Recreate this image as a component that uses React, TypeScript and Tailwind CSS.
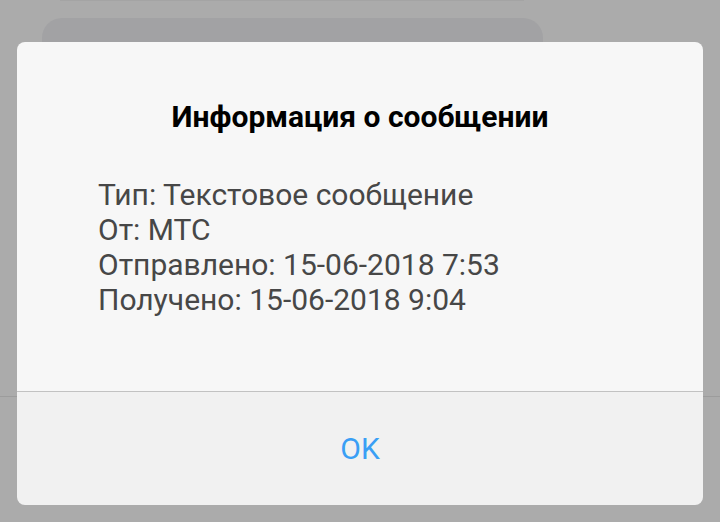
export default function App() {
  return (
    <div className="relative w-[720px] h-[522px] overflow-hidden bg-[#ababab] font-['Roboto',sans-serif]">
      <div className="ml-[60px] w-[464px] h-[1px] bg-[#a4a4a4]" />
      <div className="ml-[42px] mt-[17px] w-[501px] h-[60px] rounded-t-[20px] bg-[#a2a2a4]" />
      <div className="mt-[318px] h-[1px] bg-[#9c9c9c]" />

      <div className="absolute left-[17px] top-[42px] w-[686px] h-[463px] rounded-[8px] overflow-hidden flex flex-col">
        <div className="h-[349px] bg-[#f7f7f7]">
          <h1 className="mt-[58px] text-center text-[30px] leading-[34px] font-bold text-black">
            Информация о сообщении
          </h1>
          <div className="mt-[43px] pl-[81px] text-[30px] leading-[35px] text-[#474747]">
            <p>Тип: Текстовое сообщение</p>
            <p>От: МТС</p>
            <p>Отправлено: 15-06-2018 7:53</p>
            <p>Получено: 15-06-2018 9:04</p>
          </div>
        </div>
        <div className="h-[1px] bg-[#c2c2c2]" />
        <button className="flex-1 bg-[#f1f1f1] flex items-center justify-center text-[30px] text-[#3a9ff5]">
          OK
        </button>
      </div>
    </div>
  );
}
